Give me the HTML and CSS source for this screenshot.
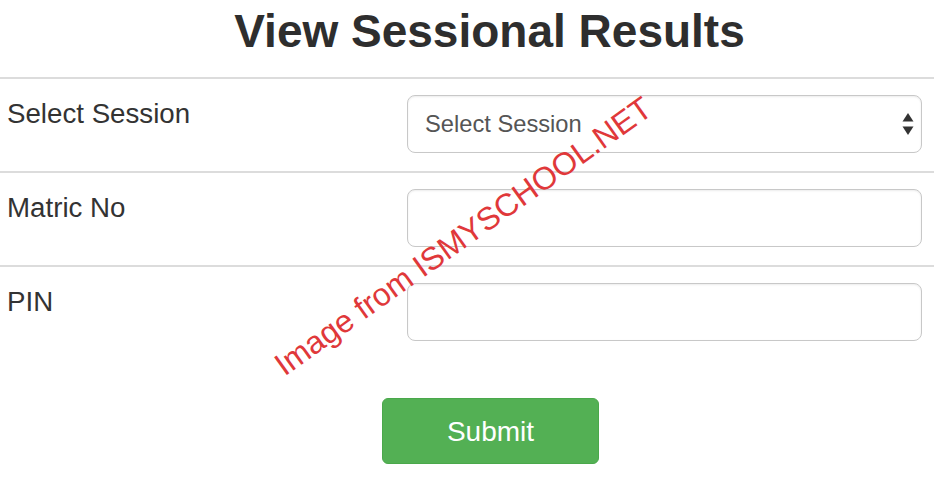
FILE: index.html
```html
<!DOCTYPE html>
<html>
<head>
    <meta name="viewport" content="width=device-width, initial-scale=1.0">
    <title>View Sessional Results</title>
    <link rel="stylesheet" href="styles.css">
</head>
<body>

    <div class="page">
        <h1 class="title">View Sessional Results</h1>

        <form class="result-form" onsubmit="return false">
            <div class="form-row">
                <label for="session">Select Session</label>
                <div class="select-wrap">
                    <select id="session" class="field">
                        <option>Select Session</option>
                    </select>
                    <svg class="select-arrows" width="12" height="24" viewBox="0 0 12 24">
                        <path d="M6 1 L11.5 9.5 L0.5 9.5 Z" fill="#333"/>
                        <path d="M6 23 L11.5 14.5 L0.5 14.5 Z" fill="#333"/>
                    </svg>
                </div>
            </div>

            <div class="form-row">
                <label for="matric">Matric No</label>
                <input type="text" id="matric" class="field">
            </div>

            <div class="form-row last">
                <label for="pin">PIN</label>
                <input type="password" id="pin" class="field">
            </div>

            <button type="submit" class="submit-btn">Submit</button>
        </form>

        <span class="watermark">Image from ISMYSCHOOL.NET</span>
    </div>

</body>
</html>
```

FILE: styles.css
```css
* {
    margin: 0;
    padding: 0;
    box-sizing: border-box;
}
body {
    background: white;
    font-family: "Liberation Sans", Arial, sans-serif;
    color: #333;
}
.page {
    position: relative;
    width: 934px;
    height: 480px;
    overflow: hidden;
}
.title {
    text-align: center;
    font-size: 46px;
    line-height: 1.1;
    font-weight: bold;
    color: #2e2e2e;
    padding: 6px 0 20px 45px;
}
.form-row {
    display: grid;
    grid-template-columns: 407px 1fr;
    border-top: 2px solid #dcdcdc;
    padding: 16px 12px 18px 0;
}
.form-row.last {
    padding-bottom: 0;
}
label {
    font-size: 27.7px;
    line-height: 38px;
    padding-left: 7px;
    color: #333;
}
.field {
    width: 100%;
    height: 58px;
    padding: 0 17px;
    border: 1px solid #c8c8c8;
    border-radius: 8px;
    box-shadow: inset 0 1px 2px rgba(0, 0, 0, 0.08);
    font-family: inherit;
    font-size: 23.7px;
    color: #555;
    background: white;
}
.select-wrap {
    position: relative;
}
select.field {
    appearance: none;
    -webkit-appearance: none;
}
.select-arrows {
    position: absolute;
    right: 8px;
    top: 17px;
    pointer-events: none;
}
.submit-btn {
    display: block;
    margin: 57px 0 0 382px;
    width: 217px;
    height: 66px;
    padding-top: 3px;
    background: #53b054;
    border: 1px solid #4aa84b;
    border-radius: 6px;
    color: white;
    font-family: inherit;
    font-size: 28px;
    cursor: pointer;
}
.watermark {
    position: absolute;
    left: 284px;
    top: 351px;
    font-size: 31.8px;
    line-height: 31px;
    color: #e0383a;
    white-space: nowrap;
    transform-origin: 0 25px;
    transform: rotate(-35.5deg);
}
```
